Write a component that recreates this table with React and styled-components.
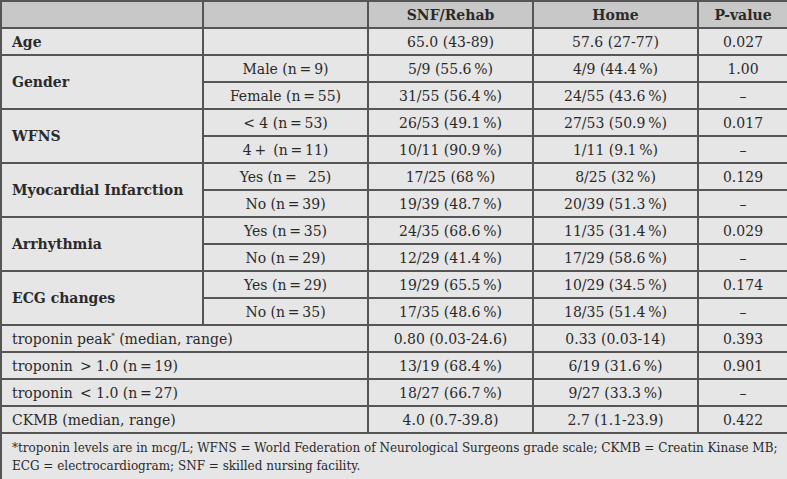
import React from "react";
import styled, { createGlobalStyle } from "styled-components";

const Global = createGlobalStyle`
  html, body {
    margin: 0;
    padding: 0;
    background: #e6e6e6;
  }
`;

const Table = styled.table`
  width: 787px;
  border-collapse: collapse;
  table-layout: fixed;
  font-family: "DejaVu Serif", "Liberation Serif", serif;
  font-size: 14px;
  color: #2a2a2a;
  background: #e6e6e6;
  border: 2px solid #555;
`;

const Head = styled.th`
  height: 25px;
  padding: 0;
  background: #c8c8c8;
  border: 2px solid #555;
  font-weight: bold;
  text-align: center;
`;

const Cell = styled.td`
  height: 25px;
  padding: 0 ${(p) => (p.$left ? "10px" : "0")};
  border: 2px solid #555;
  text-align: ${(p) => (p.$left ? "left" : "center")};
  font-weight: ${(p) => (p.$bold ? "bold" : "normal")};
  vertical-align: middle;
  white-space: nowrap;
`;

const Note = styled.td`
  height: 44px;
  box-sizing: border-box;
  padding: 5px 6px 6px 10px;
  border: 2px solid #555;
  font-size: 12px;
  line-height: 18px;
  white-space: nowrap;
  vertical-align: top;
`;

const groups = [
  {
    label: "Gender",
    rows: [
      ["Male (n\u2009=\u20099)", "5/9 (55.6\u2009%)", "4/9 (44.4\u2009%)", "1.00"],
      ["Female (n\u2009=\u200955)", "31/55 (56.4\u2009%)", "24/55 (43.6\u2009%)", "\u2013"],
    ],
  },
  {
    label: "WFNS",
    rows: [
      ["< 4 (n\u2009=\u200953)", "26/53 (49.1\u2009%)", "27/53 (50.9\u2009%)", "0.017"],
      ["4\u2009+\u2002(n\u2009=\u200911)", "10/11 (90.9\u2009%)", "1/11 (9.1\u2009%)", "\u2013"],
    ],
  },
  {
    label: "Myocardial Infarction",
    rows: [
      ["Yes (n\u2009=\u2002 25)", "17/25 (68\u2009%)", "8/25 (32\u2009%)", "0.129"],
      ["No (n\u2009=\u200939)", "19/39 (48.7\u2009%)", "20/39 (51.3\u2009%)", "\u2013"],
    ],
  },
  {
    label: "Arrhythmia",
    rows: [
      ["Yes (n\u2009=\u200935)", "24/35 (68.6\u2009%)", "11/35 (31.4\u2009%)", "0.029"],
      ["No (n\u2009=\u200929)", "12/29 (41.4\u2009%)", "17/29 (58.6\u2009%)", "\u2013"],
    ],
  },
  {
    label: "ECG changes",
    rows: [
      ["Yes (n\u2009=\u200929)", "19/29 (65.5\u2009%)", "10/29 (34.5\u2009%)", "0.174"],
      ["No (n\u2009=\u200935)", "17/35 (48.6\u2009%)", "18/35 (51.4\u2009%)", "\u2013"],
    ],
  },
];

const wide = [
  [<>troponin peak<sup style={{ fontSize: 7 }}>*</sup> (median, range)</>, "0.80 (0.03-24.6)", "0.33 (0.03-14)", "0.393"],
  ["troponin \u2009> 1.0 (n\u2009=\u200919)", "13/19 (68.4\u2009%)", "6/19 (31.6\u2009%)", "0.901"],
  ["troponin \u2009< 1.0 (n\u2009=\u200927)", "18/27 (66.7\u2009%)", "9/27 (33.3\u2009%)", "\u2013"],
  ["CKMB (median, range)", "4.0 (0.7-39.8)", "2.7 (1.1-23.9)", "0.422"],
];

export default function App() {
  return (
    <>
      <Global />
      <Table>
        <colgroup>
          <col style={{ width: 202 }} />
          <col style={{ width: 165 }} />
          <col style={{ width: 165 }} />
          <col style={{ width: 165 }} />
          <col style={{ width: 90 }} />
        </colgroup>
        <thead>
          <tr>
            <Head />
            <Head />
            <Head>SNF/Rehab</Head>
            <Head>Home</Head>
            <Head>P-value</Head>
          </tr>
        </thead>
        <tbody>
          <tr>
            <Cell $left $bold>Age</Cell>
            <Cell />
            <Cell>65.0 (43-89)</Cell>
            <Cell>57.6 (27-77)</Cell>
            <Cell>0.027</Cell>
          </tr>
          {groups.map((g) =>
            g.rows.map((r, i) => (
              <tr key={g.label + i}>
                {i === 0 && (
                  <Cell $left $bold rowSpan={2}>
                    {g.label}
                  </Cell>
                )}
                {r.map((v, j) => (
                  <Cell key={j}>{v}</Cell>
                ))}
              </tr>
            ))
          )}
          {wide.map((r, i) => (
            <tr key={"w" + i}>
              <Cell $left colSpan={2}>{r[0]}</Cell>
              <Cell>{r[1]}</Cell>
              <Cell>{r[2]}</Cell>
              <Cell>{r[3]}</Cell>
            </tr>
          ))}
          <tr>
            <Note colSpan={5}>
              *troponin levels are in mcg/L; WFNS = World Federation of Neurological Surgeons grade scale; CKMB = Creatin Kinase MB;
              <br />
              ECG = electrocardiogram; SNF = skilled nursing facility.
            </Note>
          </tr>
        </tbody>
      </Table>
    </>
  );
}
